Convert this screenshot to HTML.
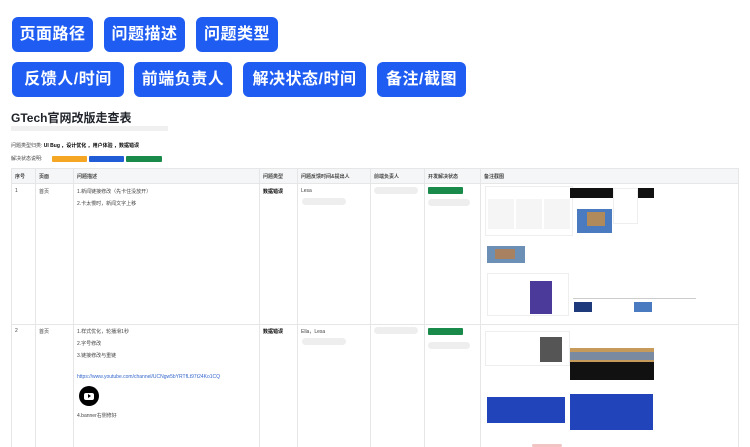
<!DOCTYPE html>
<html><head><meta charset="utf-8">
<style>
*{margin:0;padding:0;box-sizing:border-box}
body{width:750px;height:447px;overflow:hidden;background:#fff;font-family:"Liberation Sans","Noto Sans CJK SC",sans-serif;position:relative;color:#1f2329}
.b{position:absolute;height:35px;background:#1f5cf2;color:#fff;border-radius:6px;font-size:16px;font-weight:bold;line-height:35px;text-align:center;letter-spacing:0.5px}
.a{position:absolute}
.t{position:absolute;font-size:5px;color:#444;white-space:nowrap}
.vl{position:absolute;top:168px;bottom:0;width:1px;background:#e6e6e6}
.hl{position:absolute;left:11px;width:728px;height:1px;background:#e6e6e6}
.tag{position:absolute;height:6px;border-radius:1px}
.pill{position:absolute;height:7px;background:#eee;border-radius:4px}
.g{position:absolute;background:#e8e8e8}
</style></head><body>
<div class="b" style="left:12px;top:17px;width:81px">页面路径</div>
<div class="b" style="left:104px;top:17px;width:81px">问题描述</div>
<div class="b" style="left:196px;top:17px;width:82px">问题类型</div>
<div class="b" style="left:12px;top:62px;width:112px">反馈人/时间</div>
<div class="b" style="left:134px;top:62px;width:98px">前端负责人</div>
<div class="b" style="left:243px;top:62px;width:123px">解决状态/时间</div>
<div class="b" style="left:377px;top:62px;width:89px">备注/截图</div>

<div class="a" style="left:11px;top:109px;font-size:12px;font-weight:bold;color:#1f2329">GTech官网改版走查表</div>
<div class="g" style="left:11px;top:126px;width:157px;height:5px;background:#f0f0f0"></div>
<div class="t" style="left:11px;top:142px">问题类型归类: <b style="color:#000">UI Bug ，设计优化 ，用户体验 ，数据错误</b></div>
<div class="t" style="left:11px;top:155px">解决状态说明:</div>
<div class="tag" style="left:52px;top:156px;width:35px;background:#f5a623"></div>
<div class="tag" style="left:89px;top:156px;width:35px;background:#1f5cd6"></div>
<div class="tag" style="left:126px;top:156px;width:36px;background:#1a8a4a"></div>

<div class="a" style="left:11px;top:168px;width:728px;height:15px;background:#f5f6f7"></div>
<div class="hl" style="top:168px"></div><div class="hl" style="top:183px"></div><div class="hl" style="top:324px"></div>
<div class="vl" style="left:11px"></div><div class="vl" style="left:35px"></div><div class="vl" style="left:73px"></div>
<div class="vl" style="left:259px"></div><div class="vl" style="left:297px"></div><div class="vl" style="left:370px"></div>
<div class="vl" style="left:424px"></div><div class="vl" style="left:480px"></div><div class="vl" style="left:738px"></div>

<div class="t" style="left:15px;top:173px;font-weight:bold">序号</div>
<div class="t" style="left:39px;top:173px;font-weight:bold">页面</div>
<div class="t" style="left:77px;top:173px;font-weight:bold">问题描述</div>
<div class="t" style="left:263px;top:173px;font-weight:bold">问题类型</div>
<div class="t" style="left:301px;top:173px;font-weight:bold">问题反馈时间&amp;提出人</div>
<div class="t" style="left:374px;top:173px;font-weight:bold">前端负责人</div>
<div class="t" style="left:428px;top:173px;font-weight:bold">开发解决状态</div>
<div class="t" style="left:484px;top:173px;font-weight:bold">备注截图</div>

<div class="t" style="left:15px;top:188px">1</div>
<div class="t" style="left:39px;top:188px">首页</div>
<div class="t" style="left:77px;top:188px">1.新闻链接修改（先卡住没放开）</div>
<div class="t" style="left:77px;top:200px">2.卡太慢时，新闻文字上移</div>
<div class="t" style="left:263px;top:188px;font-weight:bold;color:#000">数据错误</div>
<div class="t" style="left:301px;top:188px">Lesa</div>
<div class="pill" style="left:302px;top:198px;width:44px"></div>
<div class="pill" style="left:374px;top:187px;width:44px"></div>
<div class="tag" style="left:428px;top:187px;width:35px;height:7px;background:#1a8a4a"></div>
<div class="pill" style="left:428px;top:199px;width:42px"></div>

<div class="a" style="left:485px;top:186px;width:88px;height:50px;border:1px solid #eee;background:#fff"></div>
<div class="g" style="left:488px;top:199px;width:26px;height:30px;background:#f5f5f5"></div>
<div class="g" style="left:516px;top:199px;width:26px;height:30px;background:#f5f5f5"></div>
<div class="g" style="left:544px;top:199px;width:26px;height:30px;background:#f5f5f5"></div>
<div class="a" style="left:570px;top:188px;width:84px;height:10px;background:#111"></div>
<div class="a" style="left:613px;top:188px;width:25px;height:36px;background:#fff;border:1px solid #eee"></div>
<div class="a" style="left:577px;top:209px;width:35px;height:24px;background:#4a7bc0"></div>
<div class="a" style="left:587px;top:212px;width:18px;height:14px;background:#b08a5a"></div>
<div class="a" style="left:487px;top:246px;width:38px;height:17px;background:#6c8fb5"></div>
<div class="a" style="left:495px;top:249px;width:20px;height:10px;background:#a88160"></div>
<div class="a" style="left:487px;top:273px;width:82px;height:43px;border:1px solid #eee"></div>
<div class="a" style="left:530px;top:281px;width:22px;height:33px;background:#4b3a9a"></div>
<div class="a" style="left:573px;top:298px;width:123px;height:1px;background:#ccc"></div>
<div class="a" style="left:574px;top:302px;width:18px;height:10px;background:#1f3a7a"></div>
<div class="a" style="left:634px;top:302px;width:18px;height:10px;background:#4a7bc0"></div>

<div class="t" style="left:15px;top:328px">2</div>
<div class="t" style="left:39px;top:328px">首页</div>
<div class="t" style="left:77px;top:328px">1.样式优化，轮播滑1秒</div>
<div class="t" style="left:77px;top:340px">2.字号修改</div>
<div class="t" style="left:77px;top:352px">3.链接修改与重链</div>
<div class="t" style="left:77px;top:374px;color:#3466cc">https://www.youtube.com/channel/UCNgw5bYRTfLt97t24Ko1CQ</div>
<div class="a" style="left:79px;top:386px;width:20px;height:20px;border-radius:50%;background:#000"></div>
<div class="a" style="left:84px;top:393px;width:10px;height:7px;border-radius:2px;background:#fff"></div>
<div class="a" style="left:88px;top:394px;width:0;height:0;border-left:3px solid #000;border-top:2.5px solid transparent;border-bottom:2.5px solid transparent"></div>
<div class="t" style="left:77px;top:412px">4.banner右侧修好</div>
<div class="t" style="left:263px;top:328px;font-weight:bold;color:#000">数据错误</div>
<div class="t" style="left:301px;top:328px">Ella，Lesa</div>
<div class="pill" style="left:302px;top:338px;width:44px"></div>
<div class="pill" style="left:374px;top:327px;width:44px"></div>
<div class="tag" style="left:428px;top:328px;width:35px;height:7px;background:#1a8a4a"></div>
<div class="pill" style="left:428px;top:342px;width:42px"></div>

<div class="a" style="left:485px;top:331px;width:85px;height:35px;background:#fff;border:1px solid #eee"></div>
<div class="a" style="left:540px;top:337px;width:22px;height:25px;background:#555"></div>
<div class="a" style="left:570px;top:348px;width:84px;height:32px;background:#c59a5a"></div>
<div class="a" style="left:570px;top:352px;width:84px;height:8px;background:#7a8aa0"></div>
<div class="a" style="left:570px;top:362px;width:84px;height:18px;background:#111"></div>
<div class="a" style="left:487px;top:397px;width:78px;height:26px;background:#2244bb"></div>
<div class="a" style="left:570px;top:394px;width:83px;height:36px;background:#2244bb"></div>
<div class="pill" style="left:532px;top:444px;width:30px;height:3px;background:#f2c4c4"></div>
</body></html>
